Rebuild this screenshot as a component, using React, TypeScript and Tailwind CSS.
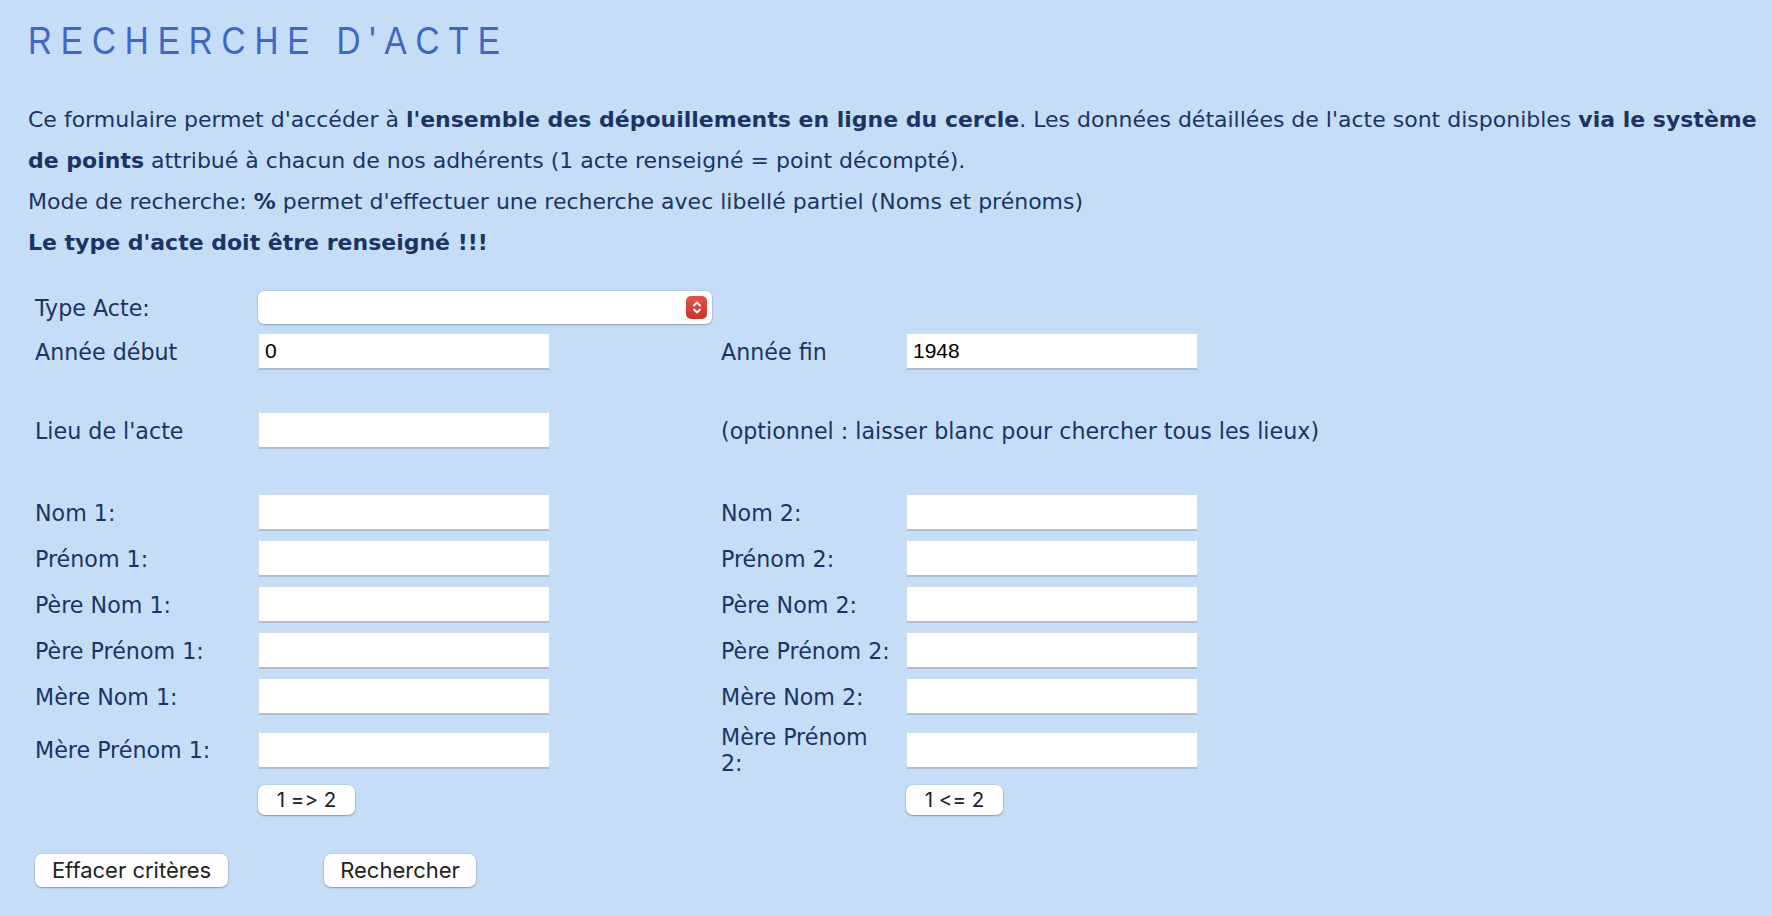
import React from "react";

function Field({ value = "" }: { value?: string }) {
  return (
    <input
      readOnly
      value={value}
      className="h-[37px] w-[292px] bg-white border border-[#d3dce9] border-b-2 border-b-[#b2bccb] px-[6px] text-[21px] text-black font-['Liberation_Sans',Arial,sans-serif] outline-none"
    />
  );
}

function Label({ children }: { children: React.ReactNode }) {
  return <div className="text-[22.2px] leading-[26px] text-[#1b3463]">{children}</div>;
}

function SmallButton({ children }: { children: React.ReactNode }) {
  return (
    <button className="h-[30px] w-[97px] rounded-[7px] bg-white shadow-[0_0_0_1px_rgba(0,0,0,0.04),0_1px_2px_rgba(0,0,0,0.3)] text-[20.5px] text-[#222] font-['Inter',sans-serif] [font-variant-ligatures:none] [font-feature-settings:'calt'_0,'liga'_0]">
      {children}
    </button>
  );
}

export default function App() {
  const rows: [string, string][] = [
    ["Nom 1:", "Nom 2:"],
    ["Prénom 1:", "Prénom 2:"],
    ["Père Nom 1:", "Père Nom 2:"],
    ["Père Prénom 1:", "Père Prénom 2:"],
    ["Mère Nom 1:", "Mère Nom 2:"],
  ];
  return (
    <div className="min-h-[916px] w-full bg-[#c6ddf8] pl-[28px] pr-[12px] pt-[21px] font-['DejaVu_Sans',Verdana,sans-serif] text-[#1b3463]">
      <h1 className="origin-left scale-x-[0.85] whitespace-nowrap text-[39px] leading-[39px] tracking-[10.5px] text-[#4067c3] font-['Liberation_Sans',Arial,sans-serif] font-normal">
        RECHERCHE D'ACTE
      </h1>

      <div className="mt-[39px] text-[22px] leading-[41px] text-[#1b3463]">
        <p className="whitespace-nowrap">
          Ce formulaire permet d'accéder à <b>l'ensemble des dépouillements en ligne du cercle</b>. Les données détaillées de l'acte sont disponibles <b>via le système</b>
          <br />
          <b>de points</b> attribué à chacun de nos adhérents (1 acte renseigné = point décompté).
        </p>
        <p className="whitespace-nowrap">
          Mode de recherche: <b>%</b> permet d'effectuer une recherche avec libellé partiel (Noms et prénoms)
        </p>
        <p className="whitespace-nowrap">
          <b>Le type d'acte doit être renseigné !!!</b>
        </p>
      </div>

      <div className="ml-[7px] mt-[28px] grid grid-cols-[223px_292px_171px_185px_292px] items-center gap-y-[9px]">
        <Label>Type Acte:</Label>
        <div className="col-span-4">
          <div className="relative h-[33px] w-[454px] rounded-[6px] bg-white shadow-[0_0_0_1px_rgba(0,0,0,0.05),0_1px_2px_rgba(0,0,0,0.25)]">
            <div className="absolute right-[5px] top-[5px] flex h-[23px] w-[21px] items-center justify-center rounded-[5px] bg-gradient-to-b from-[#e0534b] to-[#c8342d]">
              <svg width="10" height="15" viewBox="0 0 10 15" fill="none" stroke="white" strokeWidth="1.8" strokeLinecap="round" strokeLinejoin="round">
                <path d="M2 5.5 L5 2.5 L8 5.5" />
                <path d="M2 9.5 L5 12.5 L8 9.5" />
              </svg>
            </div>
          </div>
        </div>

        <Label>Année début</Label>
        <Field value="0" />
        <div />
        <Label>Année fin</Label>
        <Field value="1948" />

        <div className="col-span-5 h-[24px]" />

        <Label>Lieu de l'acte</Label>
        <Field />
        <div />
        <div className="col-span-2 whitespace-nowrap">
          <Label>(optionnel : laisser blanc pour chercher tous les lieux)</Label>
        </div>

        <div className="col-span-5 h-[27px]" />

        {rows.map(([a, b]) => (
          <React.Fragment key={a}>
            <Label>{a}</Label>
            <Field />
            <div />
            <Label>{b}</Label>
            <Field />
          </React.Fragment>
        ))}

        <Label>Mère Prénom 1:</Label>
        <Field />
        <div />
        <Label>
          Mère Prénom
          <br />
          2:
        </Label>
        <Field />

        <div />
        <div>
          <SmallButton>1 =&gt; 2</SmallButton>
        </div>
        <div />
        <div />
        <div>
          <SmallButton>1 &lt;= 2</SmallButton>
        </div>
      </div>

      <div className="ml-[7px] mt-[39px] flex gap-[96px]">
        <button className="h-[33px] w-[193px] rounded-[7px] bg-white shadow-[0_0_0_1px_rgba(0,0,0,0.04),0_1px_2px_rgba(0,0,0,0.3)] text-[22px] text-[#222] font-['Inter',sans-serif]">
          Effacer critères
        </button>
        <button className="h-[33px] w-[152px] rounded-[7px] bg-white shadow-[0_0_0_1px_rgba(0,0,0,0.04),0_1px_2px_rgba(0,0,0,0.3)] text-[22px] text-[#222] font-['Inter',sans-serif]">
          Rechercher
        </button>
      </div>
    </div>
  );
}
